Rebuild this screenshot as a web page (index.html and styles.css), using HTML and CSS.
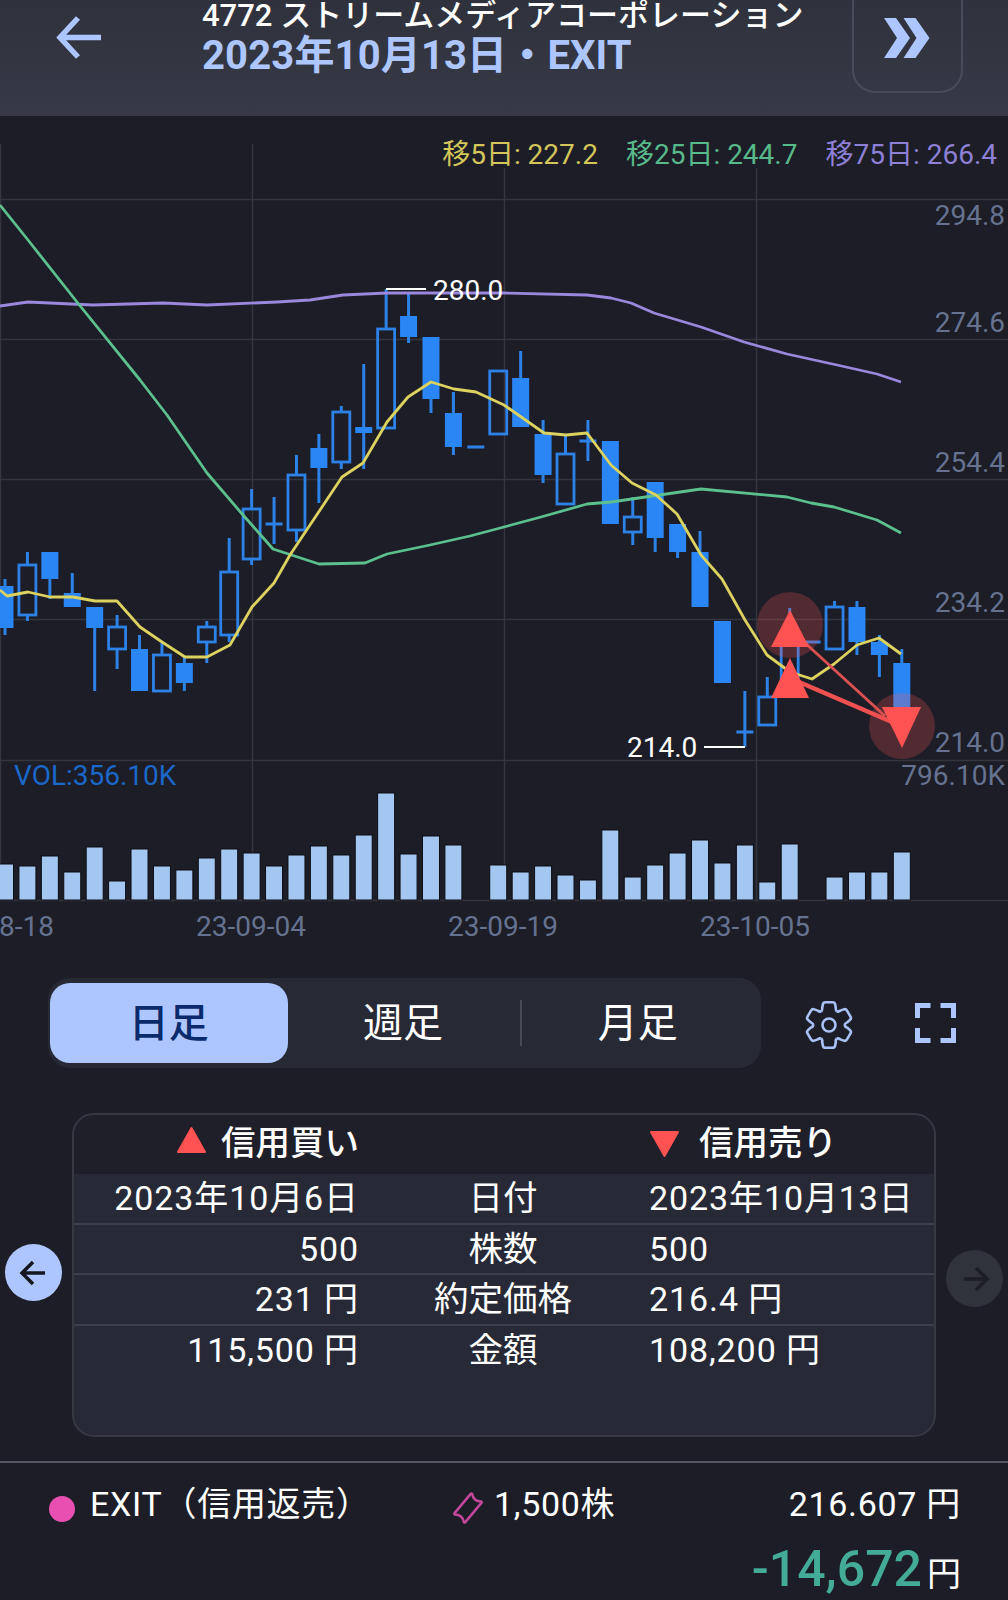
FILE: index.html
```html
<!DOCTYPE html>
<html lang="ja">
<head>
    <meta charset="UTF-8">
    <meta name="viewport" content="width=device-width, initial-scale=1.0">
    <title>4772 ストリームメディアコーポレーション</title>
    <link rel="stylesheet" href="styles.css">
</head>
<body>
    <header class="top-bar">
        <svg class="back-icon" width="48" height="48" viewBox="0 0 48 48">
            <path d="M46 22.500H6M23 3 5 22.500 23 42"></path>
        </svg>
        <div class="titles">
            <div class="title-name">4772 ストリームメディアコーポレーション</div>
            <div class="title-date">2023年10月13日・EXIT</div>
        </div>
        <div class="next-btn">
            <svg width="47" height="40" viewBox="0 0 47 40">
                <path d="M0 0H12L26 20 12 40H0L13 20ZM19.500 0H31.500L45.500 20 31.500 40H19.500L32.500 20Z"></path>
            </svg>
        </div>
    </header>

    <section class="chart">
        <div class="ma-legend">
            <span class="ma5">移5日: 227.2</span>
            <span class="ma25">移25日: 244.7</span>
            <span class="ma75">移75日: 266.4</span>
        </div>
        <svg class="chart-svg" width="1008" height="844" viewBox="0 116 1008 844">
            <g class="grid">
                <path d="M0 199.500H1008M0 339.500H1008M0 479.500H1008M0 619.500H1008M0 760.500H1008M0 900.500H1008"></path>
                <path d="M.5 144V900M252.500 144V900M504.500 160V900M756.500 160V900"></path>
            </g>
            <g id="candles"></g>
            <g id="volumes"></g>
            <g id="maLines"></g>

            <g class="axis">
                <text x="1005" y="225">294.8</text>
                <text x="1005" y="332">274.6</text>
                <text x="1005" y="472">254.4</text>
                <text x="1005" y="612">234.2</text>
                <text x="1005" y="752">214.0</text>
                <text x="1005" y="785">796.10K</text>
            </g>
            <text class="vol-label" x="14" y="785">VOL:356.10K</text>
            <g class="dates">
                <text x="-1" y="936">23-08-18</text>
                <text x="251" y="936">23-09-04</text>
                <text x="503" y="936">23-09-19</text>
                <text x="755" y="936">23-10-05</text>
            </g>

            <g class="peak">
                <path d="M386 289H426M704 747H745"></path>
                <text x="433" y="300">280.0</text>
                <text x="627" y="757">214.0</text>
            </g>

            <g class="trades">
                <circle class="halo" cx="790" cy="625" r="33"></circle>
                <circle class="halo" cx="902" cy="726" r="33"></circle>
                <path class="link thin" d="M804 642 885 716"></path>
                <path class="link" d="M799 682 892 722"></path>
                <path class="mark" d="M790 610 809 647H771Z"></path>
                <path class="mark" d="M790 658 809 698H771Z"></path>
                <path class="mark" d="M882 707H921L902 748Z"></path>
            </g>
        </svg>
    </section>

    <div class="controls">
        <div class="tabs">
            <div class="tab active">日足</div>
            <div class="tab week">週足</div>
            <span class="tab-sep"></span>
            <div class="tab month">月足</div>
        </div>
        <svg class="gear" width="50" height="50" viewBox="-25 -25 50 50">
            <defs>
                <path id="tooth" d="M-7.750 -13.400Q-6.500 -14.800 -6.800 -17L-6.200 -20.500Q-5.800 -22.800 -3.500 -22.800H3.500Q5.800 -22.800 6.200 -20.500L6.800 -17Q6.500 -14.800 7.750 -13.400"></path>
            </defs>
            <use href="#tooth"></use>
            <use href="#tooth" transform="rotate(60)"></use>
            <use href="#tooth" transform="rotate(120)"></use>
            <use href="#tooth" transform="rotate(180)"></use>
            <use href="#tooth" transform="rotate(240)"></use>
            <use href="#tooth" transform="rotate(300)"></use>
            <circle r="6.500"></circle>
        </svg>
        <svg class="expand" width="41" height="40" viewBox="0 0 41 40">
            <path d="M2.500 15V2.500H15.500M25.500 2.500H38.500V15M38.500 25V37.500H25.500M15.500 37.500H2.500V25"></path>
        </svg>
    </div>

    <div class="trade-row">
        <div class="nav-btn prev">
            <svg width="34" height="34" viewBox="0 0 34 34"><path d="M28 17H6M16 6 5 17 16 28"></path></svg>
        </div>
        <div class="card">
            <div class="card-head">
                <div class="side buy">
                    <svg width="31" height="28" viewBox="0 0 31 28"><path d="M15.500 2 29 26H2Z"></path></svg>
                    <span>信用買い</span>
                </div>
                <div></div>
                <div class="side sell">
                    <svg width="31" height="28" viewBox="0 0 31 28"><path d="M2 2H29L15.500 26Z"></path></svg>
                    <span>信用売り</span>
                </div>
            </div>
            <div class="card-row"><div>2023年10月6日</div><div>日付</div><div>2023年10月13日</div></div>
            <div class="card-row"><div>500</div><div>株数</div><div>500</div></div>
            <div class="card-row"><div>231 円</div><div>約定価格</div><div>216.4 円</div></div>
            <div class="card-row"><div>115,500 円</div><div>金額</div><div>108,200 円</div></div>
        </div>
        <div class="nav-btn next">
            <svg width="34" height="34" viewBox="0 0 34 34"><path d="M6 17H28M18 6 29 17 18 28"></path></svg>
        </div>
    </div>

    <footer class="summary">
        <div class="summary-row">
            <div class="kind"><span class="dot"></span>EXIT（信用返売）</div>
            <div class="qty">
                <svg width="32" height="32" viewBox="-16 -16 32 32">
                    <path transform="rotate(-50)" d="M-13.500 -6Q-13.500 -7 -12.500 -7H12.500Q13.500 -7 13.500 -6Q8.500 0 13.500 6Q13.500 7 12.500 7H-12.500Q-13.500 7 -13.500 6Q-8.500 0 -13.500 -6Z"></path>
                </svg>
                1,500株
            </div>
            <div class="avg">216.607 円</div>
        </div>
        <div class="total"><span class="total-num">-14,672</span><span class="total-yen">円</span></div>
    </footer>

    <script src="chart.js"></script>
</body>
</html>
```

FILE: styles.css
```css
* {
    box-sizing: border-box;
}
body {
    margin: 0;
    width: 1008px;
    height: 1600px;
    overflow: hidden;
    background-color: #1c1d27;
    color: #fff;
    font-family: Roboto, "Noto Sans CJK JP", sans-serif;
    font-size: 34px;
}

/* header */
.top-bar {
    display: flex;
    align-items: flex-start;
    height: 116px;
    background: linear-gradient(#2f323c, #373a46);
}
.back-icon {
    flex: none;
    margin: 15px 0 0 55px;
    fill: none;
    stroke: #adc6ff;
    stroke-width: 5.500;
}
.titles {
    margin-left: 99px;
}
.title-name {
    font-size: 31px;
    font-weight: 500;
    line-height: 32px;
    white-space: nowrap;
}
.title-date {
    margin-top: 3px;
    color: #adc6ff;
    font-size: 40px;
    font-weight: 700;
    letter-spacing: 0.150px;
    line-height: 42px;
    white-space: nowrap;
}
.next-btn {
    display: flex;
    align-items: flex-end;
    justify-content: center;
    flex: none;
    width: 111px;
    height: 123px;
    margin: -30px 45px 0 auto;
    padding-bottom: 33px;
    border: 2px solid #494c58;
    border-radius: 23px;
}
.next-btn path {
    fill: #adc6ff;
}

/* chart */
.chart {
    position: relative;
    height: 844px;
}
.chart-svg {
    display: block;
}
.ma-legend {
    position: absolute;
    top: 26px;
    right: 11px;
    display: flex;
    gap: 28px;
    padding-left: 10px;
    background-color: #1c1d27;
    font-size: 28px;
    line-height: 26px;
    white-space: nowrap;
}
.ma5 { color: #d3c65a; }
.ma25 { color: #58b98a; }
.ma75 { color: #8e80d6; }

.grid path {
    fill: none;
    stroke: #34353f;
    stroke-width: 1.500;
}
.axis text {
    fill: #667290;
    font-size: 28px;
    text-anchor: end;
}
.dates text {
    fill: #667290;
    font-size: 28px;
    text-anchor: middle;
}
.vol-label {
    fill: #1a68c9;
    font-size: 28px;
}
.peak path {
    fill: none;
    stroke: #fff;
    stroke-width: 2;
}
.peak text {
    fill: #fff;
    font-size: 28px;
}
.wick {
    stroke: #2d82e8;
    stroke-width: 3;
}
.body-fill {
    fill: #2a86f5;
}
.body-hollow {
    fill: none;
    stroke: #2d82e8;
    stroke-width: 2.800;
}
.vol-bar {
    fill: #a4c7f2;
    stroke: #0c0d12;
    stroke-width: 1;
}
.ma-line {
    fill: none;
    stroke-width: 2.800;
    stroke-linejoin: round;
}
.halo {
    fill: rgba(255, 82, 82, 0.24);
}
.link {
    fill: none;
    stroke: #f05050;
    stroke-width: 4.500;
}
.link.thin {
    stroke: #d95050;
    stroke-width: 3;
}
.mark {
    fill: #ff5252;
}

/* period tabs */
.controls {
    display: flex;
    align-items: center;
    height: 90px;
    margin-top: 18px;
    padding-left: 48px;
}
.tabs {
    display: flex;
    align-items: center;
    width: 713px;
    height: 90px;
    padding: 5px 6px 5px 2px;
    border-radius: 22px;
    background-color: #272935;
}
.tab {
    height: 80px;
    font-size: 40px;
    line-height: 82px;
    text-align: center;
}
.tab.active {
    width: 238px;
    border-radius: 20px;
    background-color: #adc6ff;
    color: #0b2a6b;
    font-weight: 500;
}
.tab.week {
    width: 233px;
    padding-right: 2px;
}
.tab.month {
    width: 233px;
    padding-right: 2px;
}
.tab-sep {
    width: 2px;
    height: 46px;
    background-color: #474a55;
}
.gear {
    flex: none;
    margin: 4px 0 0 43px;
    fill: none;
    stroke: #a9c1f5;
    stroke-width: 2.600;
    stroke-linejoin: round;
}
.expand {
    flex: none;
    margin-left: 61px;
    fill: none;
    stroke: #adc6ff;
    stroke-width: 5;
}

/* trade card */
.trade-row {
    display: flex;
    gap: 10px;
    margin-top: 45px;
    padding-left: 5px;
}
.nav-btn {
    display: flex;
    align-items: center;
    justify-content: center;
    flex: none;
    width: 57px;
    height: 57px;
    border-radius: 50%;
}
.nav-btn path {
    fill: none;
    stroke-width: 3.500;
}
.prev {
    margin-top: 131px;
    background-color: #adc6ff;
}
.prev path {
    stroke: #15181f;
}
.next {
    margin-top: 137px;
    background-color: #30323c;
}
.next path {
    stroke: #1c1d27;
}
.card {
    width: 864px;
    height: 324px;
    border: 2px solid #363842;
    border-radius: 22px;
    background-color: #272a36;
    overflow: hidden;
}
.card-head {
    display: grid;
    grid-template-columns: 285px 290px 1fr;
    align-items: center;
    height: 59px;
    padding-bottom: 10px;
    background-color: #1e1f29;
    font-size: 34.500px;
    font-weight: 500;
}
.side {
    display: flex;
    align-items: center;
    gap: 14px;
}
.side path {
    fill: #ff5252;
    stroke: #ff5252;
    stroke-width: 2;
    stroke-linejoin: round;
}
.buy {
    justify-content: flex-end;
}
.sell {
    gap: 19px;
}
.sell svg {
    margin-top: 8px;
}
.card-row {
    display: grid;
    grid-template-columns: 285px 290px 1fr;
    height: 50.500px;
    line-height: 48px;
    letter-spacing: 0.900px;
    border-bottom: 2px solid #3c3f4a;
}
.card-row:last-child {
    border-bottom: none;
}
.card-row div:first-child {
    text-align: right;
}
.card-row div:nth-child(2) {
    margin-left: -2px;
    font-size: 34.500px;
    letter-spacing: 0;
    text-align: center;
}

/* footer summary */
.summary {
    margin-top: 24px;
    border-top: 2px solid #555862;
}
.summary-row {
    display: grid;
    grid-template-columns: 403px 1fr auto;
    align-items: center;
    height: 76px;
    padding: 0 47px 0 49px;
}
.kind {
    display: flex;
    align-items: center;
    gap: 15px;
    letter-spacing: 0.700px;
}
.dot {
    width: 26px;
    height: 26px;
    margin-top: 15px;
    border-radius: 50%;
    background-color: #e94fb0;
}
.qty {
    display: flex;
    align-items: center;
    gap: 10px;
    letter-spacing: 0.700px;
}
.qty svg {
    margin-top: 14px;
}
.qty path {
    fill: none;
    stroke: #c4479a;
    stroke-width: 2.500;
}
.avg {
    letter-spacing: 0.700px;
}
.total {
    display: flex;
    justify-content: flex-end;
    align-items: baseline;
    gap: 5px;
    margin-top: 2px;
    padding-right: 47px;
    line-height: 56px;
}
.total-num {
    color: #45ab99;
    font-size: 50px;
    font-weight: 500;
}
.total-yen {
    font-size: 34px;
}
```

FILE: chart.js
```js
// x position of bar i, all y values below are page pixels
const barX = (i) => 5 + 22.42 * i;

// [wick top, body top, body bottom, wick bottom, type] f = filled, h = hollow, d = doji
const candles = [
    [579, 586, 628, 635, 'f'], [552, 565, 615, 621, 'h'], [552, 552, 579, 599, 'f'],
    [573, 593, 607, 607, 'f'], [607, 607, 628, 691, 'f'], [615, 627, 649, 669, 'h'],
    [635, 649, 691, 691, 'f'], [643, 655, 691, 691, 'h'], [657, 663, 683, 691, 'f'],
    [621, 627, 642, 663, 'h'], [538, 572, 635, 642, 'h'], [489, 509, 559, 565, 'h'],
    [497, 524, 524, 544, 'd'], [455, 475, 530, 542, 'h'], [434, 448, 468, 503, 'f'],
    [406, 412, 462, 469, 'h'], [364, 427, 433, 469, 'f'], [289, 329, 428, 428, 'h'],
    [293, 316, 337, 343, 'f'], [337, 337, 399, 413, 'f'], [392, 413, 447, 455, 'f'],
    [447, 447, 447, 447, 'd'], [371, 371, 434, 434, 'h'], [351, 378, 427, 427, 'f'],
    [420, 434, 475, 483, 'f'], [435, 454, 504, 504, 'h'], [420, 441, 441, 461, 'd'],
    [441, 441, 524, 524, 'f'], [497, 517, 532, 545, 'h'], [482, 482, 538, 552, 'f'],
    [524, 524, 552, 558, 'f'], [531, 552, 607, 607, 'f'], [621, 621, 683, 683, 'f'],
    [691, 732, 732, 747, 'd'], [677, 697, 725, 725, 'h'], [608, 640, 690, 690, 'h'],
    [642, 642, 642, 642, 'd'], [601, 607, 649, 649, 'h'], [601, 607, 642, 655, 'f'],
    [635, 642, 655, 677, 'f'], [649, 663, 720, 720, 'f'],
];

const volumeTops = [
    864, 866, 856, 872, 847, 881, 849, 866, 870, 858, 849, 853, 866, 855, 846, 855, 835, 793, 854, 836, 845,
    null, 865, 872, 866, 875, 880, 830, 877, 865, 853, 840, 863, 845, 882, 844, null, 877, 872, 872, 852,
];

const ma5 = [
    [0, 590], [7, 596], [28, 592], [50, 597], [73, 597], [95, 601], [117, 601], [140, 627], [162, 642],
    [185, 657], [207, 657], [230, 645], [252, 607], [274, 583], [290, 555], [342, 477], [363, 463],
    [387, 422], [408, 397], [431, 382], [454, 389], [476, 392], [504, 405], [544, 433], [566, 435],
    [587, 433], [611, 465], [632, 483], [656, 495], [677, 514], [701, 555], [722, 579], [745, 620],
    [767, 655], [790, 672], [812, 679], [834, 664], [857, 645], [879, 638], [901, 654],
];
const ma25 = [
    [0, 205], [28, 240], [77, 302], [140, 380], [167, 415], [207, 473], [243, 515], [273, 549], [319, 564],
    [365, 563], [387, 554], [430, 545], [470, 536], [504, 527], [541, 517], [587, 504], [611, 502],
    [701, 489], [787, 497], [811, 503], [834, 507], [877, 520], [901, 533],
];
const ma75 = [
    [0, 306], [28, 302], [93, 305], [163, 303], [207, 305], [277, 302], [310, 300], [343, 295], [387, 293],
    [504, 293], [587, 295], [611, 298], [631, 303], [654, 313], [701, 327], [744, 342], [787, 354],
    [837, 365], [877, 374], [901, 382],
];

const SVG_NS = 'http://www.w3.org/2000/svg';

function add(parent, tag, attrs) {
    const el = document.createElementNS(SVG_NS, tag);
    Object.keys(attrs).forEach((key) => el.setAttribute(key, attrs[key]));
    parent.appendChild(el);
}

function drawCandles() {
    const group = document.getElementById('candles');
    candles.forEach(([wickTop, top, bottom, wickBottom, type], i) => {
        const x = barX(i);
        // wicks stop at the body so hollow candles stay empty inside
        if (wickTop < top) {
            add(group, 'line', { class: 'wick', x1: x, x2: x, y1: wickTop, y2: top });
        }
        if (wickBottom > bottom) {
            add(group, 'line', { class: 'wick', x1: x, x2: x, y1: bottom, y2: wickBottom });
        }
        if (type === 'd') {
            add(group, 'line', { class: 'wick', x1: x - 8.5, x2: x + 8.5, y1: top, y2: top });
        } else if (type === 'f') {
            add(group, 'rect', { class: 'body-fill', x: x - 8.5, y: top, width: 17, height: bottom - top });
        } else {
            add(group, 'rect', { class: 'body-hollow', x: x - 8.5, y: top, width: 17, height: bottom - top });
        }
    });
}

function drawVolumes() {
    const group = document.getElementById('volumes');
    volumeTops.forEach((top, i) => {
        if (top === null) return;
        add(group, 'rect', { class: 'vol-bar', x: barX(i) - 8.5, y: top, width: 17, height: 900 - top });
    });
}

function drawLine(points, color) {
    add(document.getElementById('maLines'), 'polyline', {
        class: 'ma-line',
        stroke: color,
        points: points.map((p) => p.join(',')).join(' '),
    });
}

drawCandles();
drawVolumes();
drawLine(ma75, '#9b87dc');
drawLine(ma25, '#5cc08e');
drawLine(ma5, '#dcd25f');
```
